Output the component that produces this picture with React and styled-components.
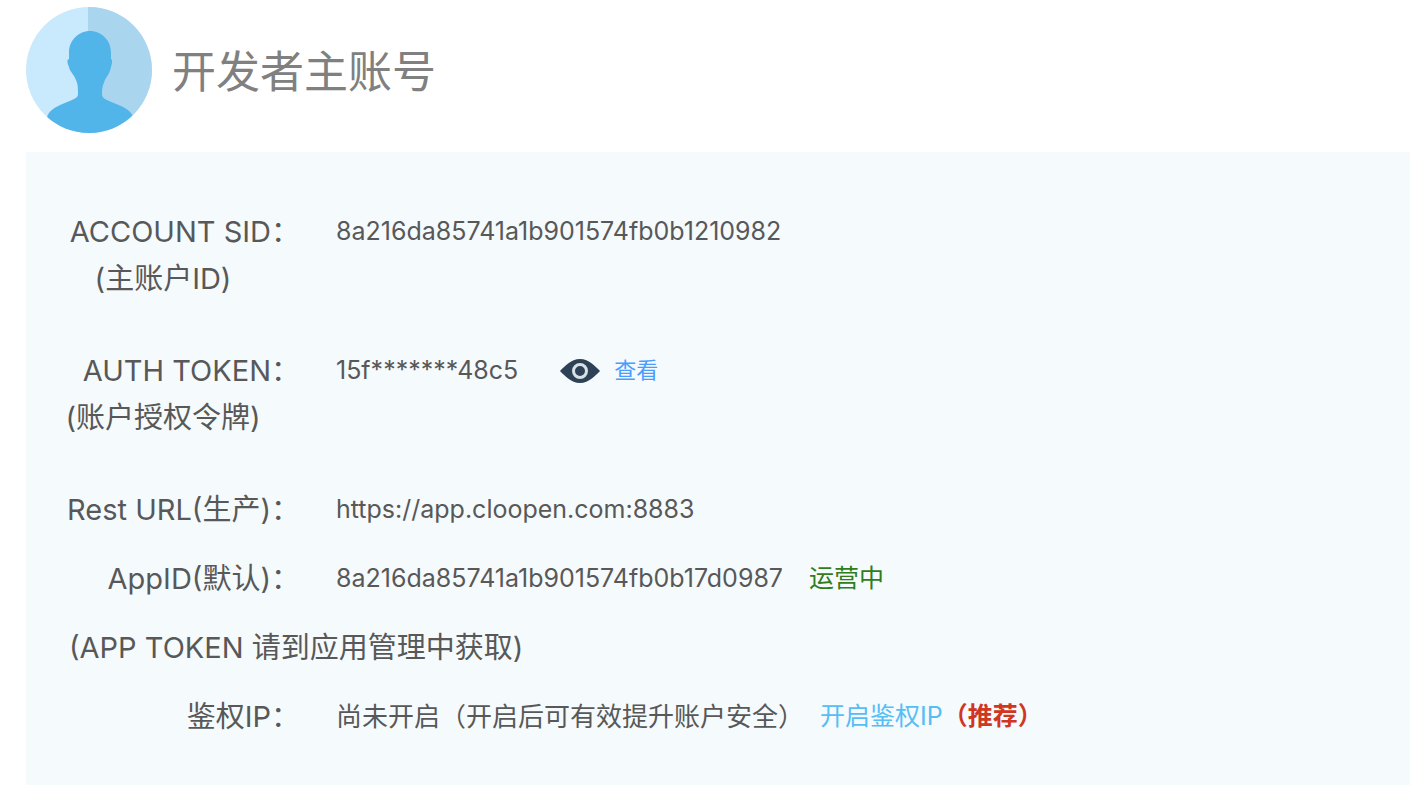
import React from "react";
import styled, { createGlobalStyle } from "styled-components";

const GlobalStyle = createGlobalStyle`
  body {
    margin: 0;
    background: #ffffff;
    color: #585858;
    font-family: Inter, "Noto Sans CJK SC", sans-serif;
  }
`;

const Page = styled.main`
  padding-left: 26px;
`;

const Header = styled.header`
  display: flex;
  align-items: center;
  gap: 20px;
  padding: 7px 0 19px;
`;

const Avatar = styled.svg`
  display: block;
  width: 126px;
  height: 126px;
`;

const Title = styled.h1`
  margin: 0;
  padding-top: 4px;
  font-size: 44px;
  font-weight: 400;
  line-height: 64px;
  color: #808080;
`;

const Panel = styled.section`
  padding: 45px 0 34px;
  background: #f5fafd;
`;

const Fields = styled.dl`
  margin: 0;
`;

const Row = styled.div`
  display: flex;
  align-items: flex-start;
  padding: 11px 0 ${(p) => (p.$tall ? "34px" : "11px")};
  line-height: 47px;
`;

const Label = styled.dt`
  flex: none;
  width: 274px;
  margin-right: 36px;
  font-size: 29px;
  text-align: right;
  white-space: nowrap;
`;

const SubLabel = styled.span`
  display: block;
  text-align: center;
`;

const Value = styled.dd`
  display: flex;
  align-items: center;
  margin: 0;
  font-size: ${(p) => (p.$cjk ? "26px" : "25px")};
  white-space: nowrap;
`;

const Note = styled.p`
  margin: 0;
  padding: 11px 0 11px 43px;
  font-size: 29px;
  line-height: 47px;
`;

const Status = styled.span`
  margin-left: 26px;
  color: #2f7d1b;
`;

const ViewButton = styled.button`
  display: flex;
  align-items: center;
  gap: 14px;
  margin: 0 0 0 42px;
  padding: 0;
  border: 0;
  background: none;
  color: #4a9cff;
  font-family: inherit;
  font-size: 22px;
  line-height: inherit;
  cursor: pointer;
`;

const EyeIcon = styled.svg`
  display: block;
  width: 40px;
  height: 24px;
`;

const EnableLink = styled.a`
  margin-left: 16px;
  color: #56bdf5;
  font-size: 25px;
  text-decoration: none;
`;

const Recommended = styled.strong`
  color: #d03620;
  font-size: 25px;
  font-weight: 700;
`;

function Field({ label, sub, cjk, children }) {
  return (
    <Row $tall={Boolean(sub)}>
      <Label>
        {label}
        {sub && <SubLabel>{sub}</SubLabel>}
      </Label>
      <Value $cjk={cjk}>{children}</Value>
    </Row>
  );
}

export default function App() {
  return (
    <Page lang="zh-CN">
      <GlobalStyle />
      <Header>
        <Avatar viewBox="0 0 126 126" aria-hidden="true">
          <defs>
            <clipPath id="avatar-circle">
              <circle cx="63" cy="63" r="63" />
            </clipPath>
          </defs>
          <g clipPath="url(#avatar-circle)">
            <rect width="126" height="126" fill="#c9e9fd" />
            <rect x="62" width="64" height="126" fill="#a9d6ee" />
            <path
              fill="#51b5ea"
              d="M64 24C76 24 85 34 85 45V52C87 53 86 57 85 60C84 66 81 69 79 73C76 80 76 83 76 87C76 91 79 92 83 94L95 99C101 102 105 104 107 110V126H21V110C23 104 28 101 34 98L46 93C50 91 52 90 52 87C52 80 52 77 49 71C47 66 44 65 43 60C42 57 40 53 43 52V45C43 34 52 24 64 24Z"
            />
          </g>
        </Avatar>
        <Title>开发者主账号</Title>
      </Header>
      <Panel>
        <Fields>
          <Field label="ACCOUNT SID：" sub="(主账户ID)">
            8a216da85741a1b901574fb0b1210982
          </Field>
          <Field label="AUTH TOKEN：" sub="(账户授权令牌)">
            15f*******48c5
            <ViewButton type="button">
              <EyeIcon viewBox="0 0 40 24" aria-hidden="true">
                <path
                  fill="#2e4257"
                  d="M0 12C4 8 11 0 20 0S36 8 40 12C36 16 29 24 20 24S4 16 0 12Z"
                />
                <circle cx="20" cy="12" r="6.5" fill="#2e4257" stroke="#d9e1e8" strokeWidth="3" />
              </EyeIcon>
              查看
            </ViewButton>
          </Field>
          <Field label="Rest URL(生产)：">https://app.cloopen.com:8883</Field>
          <Field label="AppID(默认)：">
            8a216da85741a1b901574fb0b17d0987
            <Status>运营中</Status>
          </Field>
        </Fields>
        <Note>(APP TOKEN 请到应用管理中获取)</Note>
        <Fields>
          <Field label="鉴权IP：" cjk>
            尚未开启（开启后可有效提升账户安全）
            <EnableLink href="#enable-ip">开启鉴权IP</EnableLink>
            <Recommended>（推荐）</Recommended>
          </Field>
        </Fields>
      </Panel>
    </Page>
  );
}
